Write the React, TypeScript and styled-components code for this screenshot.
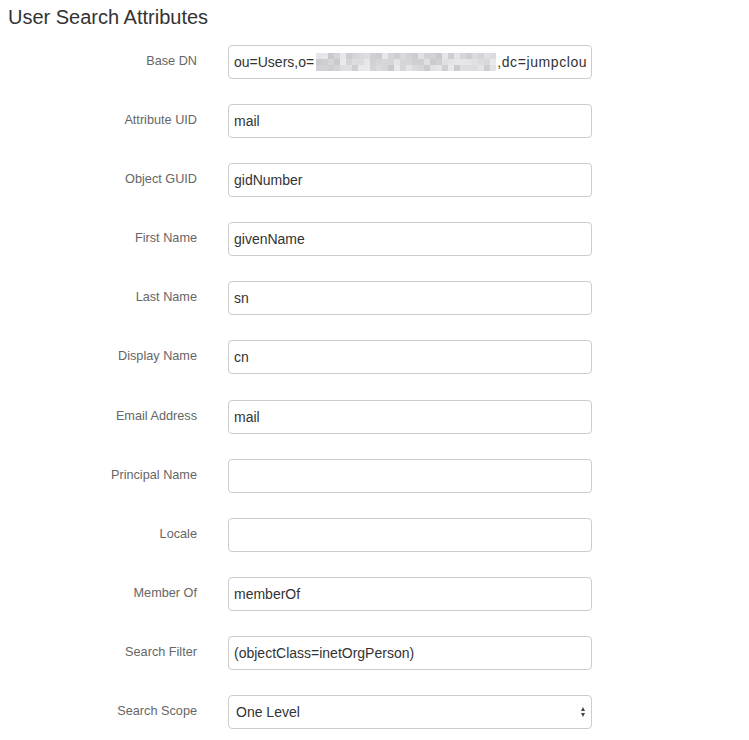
import React from "react";
import styled, { createGlobalStyle } from "styled-components";

const GlobalStyle = createGlobalStyle`
  html, body { margin: 0; padding: 0; background: #ffffff; }
  body { font-family: "Liberation Sans", Arial, Helvetica, sans-serif; }
`;

const Page = styled.div`
  padding: 6px 8px 12px 8px;
`;

const Title = styled.h3`
  margin: 0;
  font-size: 20px;
  line-height: 22px;
  font-weight: 400;
  color: #333333;
`;

const Form = styled.div`
  margin-top: 17px;
  display: grid;
  grid-template-columns: 189px 364px;
  column-gap: 31px;
  row-gap: 25.1px;
`;

const Label = styled.label`
  text-align: right;
  font-size: 12.7px;
  line-height: 17px;
  padding-top: 8px;
  color: #666666;
  white-space: nowrap;
`;

const Input = styled.input`
  box-sizing: border-box;
  width: 100%;
  height: 34px;
  margin: 0;
  border: 1px solid #cccccc;
  border-radius: 4px;
  padding: 0 5px;
  font-family: "Liberation Sans", Arial, Helvetica, sans-serif;
  font-size: 14px;
  color: #333333;
  background: #ffffff;
  outline: none;
`;

const FakeInput = styled.div`
  box-sizing: border-box;
  width: 100%;
  height: 34px;
  border: 1px solid #cccccc;
  border-radius: 4px;
  padding: 0 1px 0 5px;
  display: flex;
  align-items: center;
  overflow: hidden;
  white-space: nowrap;
  font-size: 14px;
  color: #333333;
  background: #ffffff;
`;

const Tail = styled.span`
  letter-spacing: 0.6px;
`;

const Mosaic = styled.span`
  display: inline-grid;
  grid-template-columns: repeat(30, 6px);
  grid-auto-rows: 6px;
  margin-left: 2px;
  margin-right: 1px;
  flex: none;
`;

const Cell = styled.span<{ $shade: number }>`
  background: ${(p) => `rgb(${p.$shade}, ${p.$shade}, ${p.$shade + 4})`};
`;

const SelectWrap = styled.div`
  position: relative;
  width: 100%;
`;

const Select = styled.select`
  box-sizing: border-box;
  width: 100%;
  height: 34px;
  margin: 0;
  border: 1px solid #cccccc;
  border-radius: 4px;
  padding: 0 7px;
  font-family: "Liberation Sans", Arial, Helvetica, sans-serif;
  font-size: 14px;
  color: #333333;
  background: #ffffff;
  appearance: none;
  -webkit-appearance: none;
  outline: none;
`;

const Arrows = styled.svg`
  position: absolute;
  right: 7px;
  top: 12px;
  pointer-events: none;
`;

const fields: { label: string; value: string }[] = [
  { label: "Attribute UID", value: "mail" },
  { label: "Object GUID", value: "gidNumber" },
  { label: "First Name", value: "givenName" },
  { label: "Last Name", value: "sn" },
  { label: "Display Name", value: "cn" },
  { label: "Email Address", value: "mail" },
  { label: "Principal Name", value: "" },
  { label: "Locale", value: "" },
  { label: "Member Of", value: "memberOf" },
  { label: "Search Filter", value: "(objectClass=inetOrgPerson)" },
];

function shades(): number[] {
  const out: number[] = [];
  let s = 17;
  for (let i = 0; i < 90; i++) {
    s = (s * 9301 + 49297) % 233280;
    const r = s / 233280;
    out.push(Math.round(200 + r * 34));
  }
  return out;
}

export default function App() {
  const cells = shades();
  return (
    <>
      <GlobalStyle />
      <Page>
        <Title>User Search Attributes</Title>
        <Form>
          <Label>Base DN</Label>
          <FakeInput>
            <span>ou=Users,o=</span>
            <Mosaic>
              {cells.map((c, i) => (
                <Cell key={i} $shade={c} />
              ))}
            </Mosaic>
            <Tail>,dc=jumpclou</Tail>
          </FakeInput>
          {fields.map((f) => (
            <React.Fragment key={f.label}>
              <Label>{f.label}</Label>
              <Input defaultValue={f.value} readOnly />
            </React.Fragment>
          ))}
          <Label>Search Scope</Label>
          <SelectWrap>
            <Select defaultValue="one">
              <option value="one">One Level</option>
              <option value="sub">Subtree</option>
            </Select>
            <Arrows width="4" height="10" viewBox="0 0 4 10">
              <path d="M2 0 L4 4 L0 4 Z" fill="#444" />
              <path d="M0 6 L4 6 L2 10 Z" fill="#444" />
            </Arrows>
          </SelectWrap>
        </Form>
      </Page>
    </>
  );
}
